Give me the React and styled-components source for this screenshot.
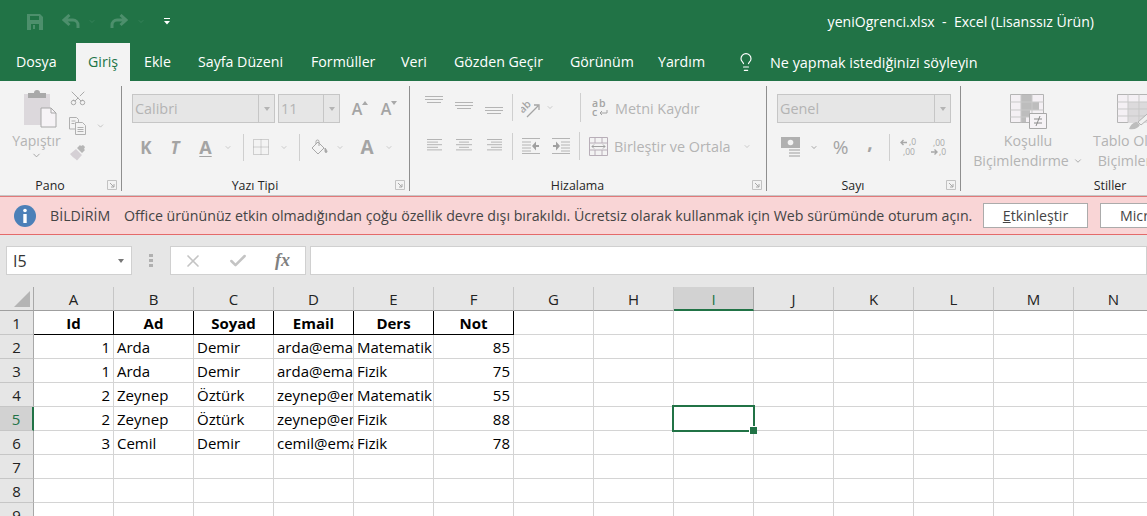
import React from "react";
import styled, { createGlobalStyle } from "styled-components";
import { Lightbulb, Scissors, ChevronDown, X, Check } from "lucide-react";

const GREEN = "#217346";
const MUTED = "#b4b4b4";
const UI_FONT = `"Open Sans", "Noto Sans", sans-serif`;

const GlobalStyle = createGlobalStyle`
  html, body {
    margin: 0;
    padding: 0;
    width: 1147px;
    height: 516px;
    overflow: hidden;
    background: #e6e6e6;
    font-family: ${UI_FONT};
  }
  * { box-sizing: border-box; }
`;

const Page = styled.div`
  width: 1147px;
  height: 516px;
  overflow: hidden;
`;

/* title bar */
const TitleBar = styled.div`
  height: 43px;
  background: ${GREEN};
  display: flex;
  align-items: center;
  padding-left: 27px;
  color: #fff;
`;
const QatIcon = styled.span`
  display: inline-flex;
  margin-left: ${(p) => p.$ml || 0}px;
`;
const DocTitle = styled.div`
  margin-left: auto;
  padding-right: 53px;
  font-size: 14.1px;
  white-space: pre;
  color: #fff;
`;

/* tabs */
const TabBar = styled.div`
  height: 38px;
  background: ${GREEN};
  display: flex;
  padding-left: 4px;
`;
const Tab = styled.div`
  flex: none;
  width: ${(p) => p.$w}px;
  margin-right: ${(p) => p.$mr || 0}px;
  padding-left: 12px;
  line-height: 38px;
  font-size: 14.2px;
  white-space: nowrap;
  color: ${(p) => (p.$active ? GREEN : "#fff")};
  background: ${(p) => (p.$active ? "#f3f3f3" : "transparent")};
`;
const TellMe = styled.div`
  display: flex;
  align-items: center;
  gap: 14px;
  margin-left: 9px;
  color: #fff;
  font-size: 14.4px;
  white-space: nowrap;
`;

/* ribbon */
const Ribbon = styled.div`
  height: 115px;
  background: #f3f3f3;
  border-bottom: 1px solid #c6c6c6;
  display: flex;
  overflow: hidden;
`;
const Group = styled.div`
  flex: none;
  width: ${(p) => p.$w}px;
  display: flex;
  flex-direction: column;
`;
const GroupSep = styled.div`
  flex: none;
  width: 1px;
  margin: 5px 0 4px;
  background: #8e8e8e;
`;
const GroupBody = styled.div`
  flex: 1;
  min-height: 0;
`;
const GroupFooter = styled.div`
  flex: none;
  height: 18px;
  margin-bottom: 1px;
  display: flex;
  align-items: center;
  padding-right: 4px;
`;
const GroupLabel = styled.div`
  flex: 1;
  text-align: center;
  padding-right: 7px;
  font-size: 12.4px;
  color: #262626;
`;
const Launcher = styled.svg`
  flex: none;
  width: 10px;
  height: 10px;
`;
const ToolRow = styled.div`
  display: flex;
  align-items: center;
  height: ${(p) => p.$h}px;
  margin-top: ${(p) => p.$mt || 0}px;
  padding-left: ${(p) => p.$pl || 0}px;
`;
const Tool = styled.span`
  flex: none;
  display: inline-flex;
  align-items: center;
  justify-content: center;
  width: ${(p) => p.$w}px;
  margin-left: ${(p) => p.$ml || 0}px;
  margin-top: ${(p) => p.$mt || 0}px;
`;
const Glyph = styled(Tool)`
  color: #a4a4a4;
  font-size: ${(p) => p.$size || 17}px;
  font-weight: ${(p) => p.$weight || 700};
  font-style: ${(p) => (p.$italic ? "italic" : "normal")};
  text-decoration: ${(p) => (p.$under ? "underline" : "none")};
  text-underline-offset: 2px;
  line-height: 1;
`;
const RuleV = styled.span`
  flex: none;
  width: 1px;
  height: ${(p) => p.$h || 27}px;
  margin-left: ${(p) => p.$ml || 0}px;
  background: #cfcfcf;
`;
const Combo = styled.div`
  flex: none;
  width: ${(p) => p.$w}px;
  margin-left: ${(p) => p.$ml || 0}px;
  height: 29px;
  background: #e6e6e6;
  border: 1px solid #c6c6c6;
  display: flex;
  align-items: center;
  color: #b4b4b4;
  font-size: 14.4px;
`;
const ComboText = styled.span`
  flex: 1;
  padding-left: 2px;
`;
const ComboArrow = styled.span`
  flex: none;
  width: 16px;
  height: 100%;
  border-left: 1px solid #c6c6c6;
  display: flex;
  align-items: center;
  justify-content: center;
  &::after {
    content: "";
    border: 3.5px solid transparent;
    border-top: 4px solid #b4b4b4;
    margin-top: 4px;
  }
`;
const MutedText = styled.span`
  flex: none;
  margin-left: ${(p) => p.$ml || 0}px;
  margin-top: 1px;
  color: ${MUTED};
  font-size: 14.4px;
  white-space: nowrap;
`;

/* pano group */
const PasteArea = styled.div`
  display: flex;
`;
const PasteColumn = styled.div`
  flex: none;
  width: 49px;
  margin-left: 12px;
  padding-top: 9px;
  display: flex;
  flex-direction: column;
  align-items: center;
  color: ${MUTED};
  font-size: 14px;
`;
const PasteBoard = styled.div`
  margin-left: 7px;
  height: 38px;
`;
const PasteLabel = styled.div`
  margin-top: 4px;
  line-height: 18px;
`;
const ClipColumn = styled.div`
  margin-left: 8px;
  padding-top: 8px;
  display: flex;
  flex-direction: column;
  gap: 10px;
`;

/* stiller group */
const StyleRow = styled.div`
  display: flex;
  padding-top: 13px;
`;
const StyleButton = styled.div`
  flex: none;
  width: ${(p) => p.$w}px;
  margin-left: ${(p) => p.$ml || 0}px;
  display: flex;
  flex-direction: column;
  align-items: center;
  color: ${MUTED};
  font-size: 14.2px;
  line-height: 20px;
  white-space: nowrap;
`;
const StyleIcon = styled.div`
  height: 37px;
`;
const StyleLine = styled.div`
  display: flex;
  align-items: center;
  gap: 4px;
`;

/* notification */
const Notice = styled.div`
  height: 39px;
  background: #f9d5d6;
  border-top: 1px solid #e07a7a;
  border-bottom: 1px solid #e46a6a;
  display: flex;
  align-items: center;
  padding-left: 14px;
  color: #444;
  white-space: nowrap;
  overflow: hidden;
`;
const NoticeTitle = styled.span`
  flex: none;
  margin-left: 14px;
  width: 74px;
  font-size: 14.2px;
`;
const NoticeText = styled.span`
  flex: none;
  width: 859px;
  font-size: 14.2px;
`;
const NoticeButton = styled.button`
  flex: none;
  width: ${(p) => p.$w}px;
  margin-right: 12px;
  height: 25px;
  padding: 0;
  background: #fff;
  border: 1px solid #ababab;
  font-family: inherit;
  font-size: 14.2px;
  color: #444;
  text-align: ${(p) => p.$align || "center"};
  padding-left: ${(p) => p.$pl || 0}px;
  u { text-decoration: underline; }
`;

/* formula bar */
const FormulaBar = styled.div`
  height: 52px;
  background: #e6e6e6;
  padding-top: 11px;
  display: flex;
  align-items: flex-start;
`;
const FormulaBox = styled.div`
  flex: ${(p) => (p.$grow ? 1 : "none")};
  width: ${(p) => p.$w}px;
  margin-left: ${(p) => p.$ml}px;
  height: 29px;
  background: #fff;
  border: 1px solid #d0d0d0;
  display: flex;
  align-items: center;
`;
const NameText = styled.span`
  flex: 1;
  padding-left: 6px;
  font-size: 16px;
  color: #333;
`;
const NameArrow = styled.span`
  margin-right: 7px;
  margin-top: 3px;
  border: 3.5px solid transparent;
  border-top: 4px solid #777;
`;
const Dots = styled.div`
  flex: none;
  margin-left: 17px;
  margin-top: 8px;
  width: 4px;
  display: flex;
  flex-direction: column;
  gap: 2px;
  span {
    height: 3px;
    background: #b0b0b0;
  }
`;
const FxText = styled.span`
  margin-left: 27px;
  font-family: "Liberation Serif", serif;
  font-style: italic;
  font-weight: 700;
  font-size: 18px;
  color: #808080;
`;

/* sheet */
const Sheet = styled.div`
  display: grid;
  grid-template-columns: 34px repeat(14, 80px);
  grid-auto-rows: 24px;
  background: #fff;
  font-family: ${UI_FONT};
`;
const Corner = styled.div`
  background: #e6e6e6;
  border-right: 1px solid #a8a8a8;
  border-bottom: 1px solid #9f9f9f;
  display: flex;
  align-items: flex-end;
  justify-content: flex-end;
  padding: 0 3px 3px 0;
`;
const ColHead = styled.div`
  background: ${(p) => (p.$sel ? "#d2d2d2" : "#e6e6e6")};
  border-right: 1px solid ${(p) => (p.$sel ? "#a8a8a8" : "#c6c6c6")};
  border-bottom: ${(p) => (p.$sel ? `2px solid ${GREEN}` : "1px solid #9f9f9f")};
  text-align: center;
  line-height: 24px;
  font-size: 15px;
  color: ${(p) => (p.$sel ? GREEN : "#222")};
`;
const RowHead = styled.div`
  background: ${(p) => (p.$sel ? "#d2d2d2" : "#e6e6e6")};
  border-right: ${(p) => (p.$sel ? `2px solid ${GREEN}` : "1px solid #a8a8a8")};
  border-bottom: 1px solid #c6c6c6;
  text-align: center;
  line-height: 24px;
  font-size: 15px;
  color: ${(p) => (p.$sel ? GREEN : "#222")};
`;
const Cell = styled.div`
  position: relative;
  overflow: ${(p) => (p.$sel ? "visible" : "hidden")};
  white-space: nowrap;
  padding: 0 3px;
  line-height: 24px;
  font-size: 15px;
  color: #000;
  text-align: ${(p) => p.$align || "left"};
  font-weight: ${(p) => (p.$bold ? 700 : 400)};
  border-right: 1px solid ${(p) => (p.$boxed ? "#000" : "#d4d4d4")};
  border-bottom: 1px solid ${(p) => (p.$boxed ? "#000" : "#d4d4d4")};
`;
const Selection = styled.div`
  position: absolute;
  left: -2px;
  top: -2px;
  width: 83px;
  height: 27px;
  border: 2px solid ${GREEN};
  z-index: 2;
  &::after {
    content: "";
    position: absolute;
    right: -4px;
    bottom: -4px;
    width: 7px;
    height: 7px;
    background: ${GREEN};
    border: 1px solid #fff;
    border-right: 0;
    border-bottom: 0;
  }
`;

/* drawings */
const Chev = ({ ml = 0, w = 9, color = "#a0a0a0" }) => (
  <Tool $w={w} $ml={ml}>
    <ChevronDown size={w + 3} color={color} strokeWidth={1.5} />
  </Tool>
);

const LauncherIcon = () => (
  <Launcher viewBox="0 0 10 10">
    <path d="M.5 9.500V.5h9v9z" fill="none" stroke="#c2c2c2" />
    <path d="M3 3l4 4M7 4v3H4" fill="none" stroke="#a8a8a8" />
  </Launcher>
);

const SaveIcon = () => (
  <svg width="16" height="16" viewBox="0 0 16 16">
    <path d="M0 0h13l3 3v13H0z" fill="#4d8f6c" />
    <path d="M3 2h9v4H3z" fill={GREEN} />
    <path d="M4 10h8v6H4z" fill={GREEN} />
    <path d="M6 11h2v4H6z" fill="#4d8f6c" />
  </svg>
);
const UndoIcon = ({ flip }) => (
  <svg width="18" height="15" viewBox="0 0 18 15" style={flip ? { transform: "scaleX(-1)" } : undefined}>
    <path d="M7.500 1L2 6l5.500 5M2.500 6H11a5 5 0 0 1 5 5v3" fill="none" stroke="#4d8f6c" strokeWidth="3" />
  </svg>
);
const CustomizeIcon = () => (
  <svg width="7" height="7" viewBox="0 0 7 7">
    <path d="M0 0h6v1H0zM0 3h6L3 6.500z" fill="#fff" />
  </svg>
);
const ClipboardIcon = () => (
  <svg width="34" height="38" viewBox="0 0 34 38">
    <path d="M1 4h26v31H1z" fill="#dcd8dc" />
    <path d="M5 3h6a3 3 0 0 1 6 0h6v5H5z" fill="#a9a9a9" />
    <path d="M18 18h10l5 5v14H18z" fill="#f6f3f6" stroke="#a8a8a8" />
    <path d="M28 18v5h5" fill="none" stroke="#a8a8a8" />
  </svg>
);
const CopyIcon = () => (
  <svg width="17" height="18" viewBox="0 0 17 18" fill="none" stroke="#b0b0b0">
    <path d="M.5.500h7l2 2V12H.5z" fill="#f3f3f3" />
    <path d="M6.500 5.500h7l3 3v9h-10z" fill="#f3f3f3" />
    <path d="M2.500 4h4M2.500 6.500h3M8.500 10.500h6M8.500 12.500h6M8.500 14.500h6" />
  </svg>
);
const BrushIcon = () => (
  <svg width="18" height="16" viewBox="0 0 18 16">
    <path d="M1 9l6-5 6 6-5 5.500C6 13 4 13 1 9z" fill="#d5d0d5" />
    <path d="M8 3l3-3 1 1 2-1 2 2-1 2 1 1-3 3z" fill="#b6b6b6" />
  </svg>
);
const GrowIcon = ({ down }) => (
  <span style={{ display: "inline-flex", alignItems: "flex-start" }}>
    <Glyph $w={11} $size={16} $weight={600}>A</Glyph>
    <svg width="6" height="4" viewBox="0 0 6 4" style={{ marginLeft: -1 }}>
      <path d={down ? "M0 0h6L3 4z" : "M0 4h6L3 0z"} fill="#a8a8a8" />
    </svg>
  </span>
);
const BordersIcon = () => (
  <svg width="16" height="16" viewBox="0 0 16 16" fill="none" stroke="#a8a8a8" strokeDasharray="1 1">
    <path d="M.5.500h15v15H.5zM8 .500v15M.5 8h15" />
  </svg>
);
const FillIcon = () => (
  <svg width="17" height="17" viewBox="0 0 17 17" fill="none" stroke="#a8a8a8">
    <path d="M1 9l6-6 6 6-6 6z" fill="#f3f3f3" />
    <path d="M5 5V2.500a1.500 1.500 0 0 1 3 0V7" />
    <path d="M14 9c1.500 2 2 3 2 3.500a1 1 0 0 1-2 0z" fill="#a8a8a8" />
  </svg>
);
const AlignLines = ({ widths, gap = 3, x = [], w = 18 }) => (
  <svg width={w} height={widths.length * gap + 1} viewBox={`0 0 ${w} ${widths.length * gap + 1}`} stroke="#b4b4b4">
    {widths.map((l, i) => (
      <path key={i} d={`M${x[i] ?? 0} ${i * gap + 0.5}h${l}`} />
    ))}
  </svg>
);
const OrientIcon = () => (
  <svg width="20" height="20" viewBox="0 0 20 20">
    <text x="-1" y="11" transform="rotate(-45 6 10)" fontFamily="Open Sans" fontWeight="600" fontSize="10.500" fill="#a4a4a4">ab</text>
    <path d="M6 19L17 8M13 7h5v5" fill="none" stroke="#a4a4a4" strokeWidth="1.300" />
  </svg>
);
const WrapIcon = () => (
  <svg width="17" height="20" viewBox="0 0 17 20">
    <text x="0" y="9" fontFamily="Open Sans" fontWeight="600" fontSize="10.500" letterSpacing="1" fill="#a4a4a4">ab</text>
    <text x="0" y="18" fontFamily="Open Sans" fontWeight="600" fontSize="10.500" fill="#a4a4a4">c</text>
    <path d="M15 12v3H8M10 13l-2 2 2 2" fill="none" stroke="#a4a4a4" />
  </svg>
);
const IndentIcon = ({ flip }) => (
  <svg width="18" height="16" viewBox="0 0 18 16" style={flip ? { transform: "scaleX(-1)" } : undefined}>
    <path d="M0 .500h18M0 15.500h18M9 4h9M9 7h9M9 10h9M9 13h9" stroke="#b4b4b4" fill="none" />
    <path d="M1 7h3V3.500L8 8l-4 4.500V9H1z" fill="#a0a0a0" />
  </svg>
);
const MergeIcon = () => (
  <svg width="19" height="19" viewBox="0 0 19 19" fill="none" stroke="#b8aeb8">
    <path d="M.5.500h18v18H.5zM.5 6h18M.5 13h18M6 .500V6M13 .500V6M6 13v5.500M13 13v5.500" />
    <path d="M3 9.500h13M5 7.500l-2 2 2 2M14 7.500l2 2-2 2" stroke="#a0a0a0" />
  </svg>
);
const CurrencyIcon = () => (
  <svg width="20" height="20" viewBox="0 0 20 20">
    <path d="M0 0h19v11H0z" fill="#b0b0b0" />
    <circle cx="9.500" cy="5.500" r="2.800" fill="#f3f3f3" />
    <path d="M8 12h11v2H8zM8 15h11v2H8zM8 18h11v2H8z" fill="#c8c8c8" />
  </svg>
);
const DecimalIcon = ({ up }) => (
  <svg width="17" height="19" viewBox="0 0 17 19" fontFamily="Open Sans" fontSize="8.500" fill="#a8a8a8">
    {up ? (
      <>
        <path d="M7 4.500H1M3.500 2L1 4.500 3.500 7" fill="none" stroke="#a8a8a8" strokeWidth="1.400" />
        <text x="9" y="7">,0</text>
        <text x="3" y="17">,00</text>
      </>
    ) : (
      <>
        <text x="3" y="8">,00</text>
        <path d="M1 14h6M4.500 11.500L7 14l-2.500 2.500" fill="none" stroke="#a8a8a8" strokeWidth="1.400" />
        <text x="9" y="17">,0</text>
      </>
    )}
  </svg>
);
const CondFormatIcon = () => (
  <svg width="37" height="35" viewBox="0 0 37 35">
    <path d="M.5.500h33v28H.5z" fill="#f4f0f4" stroke="#b4b4b4" />
    <path d="M11 1h11v7H11zM11 8h18v8H11zM11 16h9v7H11zM11 23h5v5H11z" fill="#bdbdbd" />
    <path d="M11 .500v28M22 .500v28M.5 8h33M.5 16h33M.5 23h33" stroke="#c9c9c9" fill="none" />
    <path d="M19.500 19.500h17v15h-17z" fill="#f6f3f6" stroke="#a8a8a8" />
    <path d="M24 25h8M24 29h8M30 22l-4 10" stroke="#8c8c8c" fill="none" />
  </svg>
);
const TableFormatIcon = () => (
  <svg width="37" height="36" viewBox="0 0 37 36">
    <path d="M.5.500h36v28H.5z" fill="#f4f0f4" stroke="#b4b4b4" />
    <path d="M11 8h26v21H11z" fill="#dcdadc" />
    <path d="M11 .500v28M22 .500v28M32 .500v28M.5 8h36M.5 15h36M.5 22h36" stroke="#c9c9c9" fill="none" />
    <path d="M12 35c2-5 5-7 8-7l3 3c-2 3-5 5-11 4z" fill="#bdbdbd" />
    <path d="M21 28l16-14v6L24 31z" fill="#f0f0f0" stroke="#b4b4b4" />
  </svg>
);
const InfoIcon = () => (
  <svg width="22" height="22" viewBox="0 0 22 22" style={{ flex: "none" }}>
    <circle cx="11" cy="11" r="11" fill="#4c80b8" />
    <circle cx="11" cy="5.500" r="1.800" fill="#fff" />
    <path d="M9.300 9h3.400v9H9.300z" fill="#fff" />
  </svg>
);
const CornerIcon = () => (
  <svg width="16" height="16" viewBox="0 0 16 16">
    <path d="M16 0v16H0z" fill="#b4b4b4" />
  </svg>
);

const COLS = ["A", "B", "C", "D", "E", "F", "G", "H", "I", "J", "K", "L", "M", "N"];
const HEAD = ["Id", "Ad", "Soyad", "Email", "Ders", "Not"];
const DATA = [
  ["1", "Arda", "Demir", "arda@email.com", "Matematik", "85"],
  ["1", "Arda", "Demir", "arda@email.com", "Fizik", "75"],
  ["2", "Zeynep", "Öztürk", "zeynep@email.com", "Matematik", "55"],
  ["2", "Zeynep", "Öztürk", "zeynep@email.com", "Fizik", "88"],
  ["3", "Cemil", "Demir", "cemil@email.com", "Fizik", "78"],
];
const SEL_COL = 8;
const SEL_ROW = 5;

const rowValues = (row) => {
  if (row === 1) return HEAD;
  return DATA[row - 2] || [];
};

const SheetGrid = () => (
  <Sheet>
    <Corner>
      <CornerIcon />
    </Corner>
    {COLS.map((c, i) => (
      <ColHead key={c} $sel={i === SEL_COL}>{c}</ColHead>
    ))}
    {[1, 2, 3, 4, 5, 6, 7, 8, 9].map((row) => {
      const vals = rowValues(row);
      return (
        <React.Fragment key={row}>
          <RowHead $sel={row === SEL_ROW}>{row}</RowHead>
          {COLS.map((c, i) => {
            const numeric = i === 0 || i === 5;
            const isHead = row === 1 && i < 6;
            const selected = row === SEL_ROW && i === SEL_COL;
            return (
              <Cell
                key={c}
                $sel={selected}
                $bold={isHead}
                $boxed={isHead}
                $align={isHead ? "center" : numeric ? "right" : "left"}
              >
                {vals[i]}
                {selected && <Selection />}
              </Cell>
            );
          })}
        </React.Fragment>
      );
    })}
  </Sheet>
);

const App = () => {
  return (
    <Page>
      <GlobalStyle />
      <TitleBar>
        <QatIcon><SaveIcon /></QatIcon>
        <QatIcon $ml={19}><UndoIcon /></QatIcon>
        <Chev ml={8} w={8} color="#4d8f6c" />
        <QatIcon $ml={14}><UndoIcon flip /></QatIcon>
        <Chev ml={9} w={8} color="#4d8f6c" />
        <QatIcon $ml={19}><CustomizeIcon /></QatIcon>
        <DocTitle>yeniOgrenci.xlsx  -  Excel (Lisanssız Ürün)</DocTitle>
      </TitleBar>

      <TabBar>
        <Tab $w={65} $mr={7}>Dosya</Tab>
        <Tab $w={54} $mr={2} $active>Giriş</Tab>
        <Tab $w={54}>Ekle</Tab>
        <Tab $w={113}>Sayfa Düzeni</Tab>
        <Tab $w={90}>Formüller</Tab>
        <Tab $w={53}>Veri</Tab>
        <Tab $w={116}>Gözden Geçir</Tab>
        <Tab $w={88}>Görünüm</Tab>
        <Tab $w={81}>Yardım</Tab>
        <TellMe>
          <Lightbulb size={20} strokeWidth={1.4} />
          Ne yapmak istediğinizi söyleyin
        </TellMe>
      </TabBar>

      <Ribbon>
        <Group $w={121}>
          <GroupBody>
            <PasteArea>
              <PasteColumn>
                <PasteBoard><ClipboardIcon /></PasteBoard>
                <PasteLabel>Yapıştır</PasteLabel>
                <ChevronDown size={11} color="#a0a0a0" />
              </PasteColumn>
              <ClipColumn>
                <Scissors size={18} color="#a8a8a8" strokeWidth={1.3} style={{ transform: "rotate(-90deg)" }} />
                <ToolRow $h={18}>
                  <CopyIcon />
                  <Chev ml={10} />
                </ToolRow>
                <BrushIcon />
              </ClipColumn>
            </PasteArea>
          </GroupBody>
          <GroupFooter>
            <GroupLabel>Pano</GroupLabel>
            <LauncherIcon />
          </GroupFooter>
        </Group>
        <GroupSep />

        <Group $w={287}>
          <GroupBody>
            <ToolRow $h={29} $mt={13} $pl={10}>
              <Combo $w={143}><ComboText>Calibri</ComboText><ComboArrow /></Combo>
              <Combo $w={62} $ml={3}><ComboText>11</ComboText><ComboArrow /></Combo>
              <Tool $w={15} $ml={12}><GrowIcon /></Tool>
              <Tool $w={15} $ml={14}><GrowIcon down /></Tool>
            </ToolRow>
            <ToolRow $h={28} $mt={10} $pl={18}>
              <Glyph $w={12}>K</Glyph>
              <Glyph $w={12} $ml={17} $italic>T</Glyph>
              <Glyph $w={15} $ml={17} $size={18} $under>A</Glyph>
              <Chev ml={11} w={8} />
              <RuleV $ml={11} />
              <Tool $w={16} $ml={9}><BordersIcon /></Tool>
              <Chev ml={11} w={8} />
              <RuleV $ml={11} />
              <Tool $w={17} $ml={11}><FillIcon /></Tool>
              <Chev ml={8} w={8} />
              <Glyph $w={12} $ml={17} $size={19}>A</Glyph>
              <Chev ml={12} w={8} />
            </ToolRow>
          </GroupBody>
          <GroupFooter>
            <GroupLabel>Yazı Tipi</GroupLabel>
            <LauncherIcon />
          </GroupFooter>
        </Group>
        <GroupSep />

        <Group $w={356}>
          <GroupBody>
            <ToolRow $h={29} $mt={12} $pl={15}>
              <Tool $w={18} $mt={-14}><AlignLines widths={[18, 18, 14]} x={[0, 0, 2]} /></Tool>
              <Tool $w={18} $ml={12} $mt={-1}><AlignLines widths={[18, 18, 14]} x={[0, 0, 2]} /></Tool>
              <Tool $w={18} $ml={12} $mt={8}><AlignLines widths={[18, 18, 14]} x={[0, 0, 2]} /></Tool>
              <RuleV $ml={9} />
              <Tool $w={20} $ml={8}><OrientIcon /></Tool>
              <Chev ml={5} w={8} />
              <RuleV $ml={26} $h={29} />
              <Tool $w={17} $ml={11}><WrapIcon /></Tool>
              <MutedText $ml={6}>Metni Kaydır</MutedText>
            </ToolRow>
            <ToolRow $h={28} $mt={10} $pl={17}>
              <Tool $w={15}><AlignLines w={15} widths={[15, 11, 15, 11, 15]} gap={2.600} /></Tool>
              <Tool $w={16} $ml={14}><AlignLines w={16} widths={[16, 10, 16, 10, 16]} x={[0, 3, 0, 3, 0]} gap={2.600} /></Tool>
              <Tool $w={15} $ml={15}><AlignLines w={15} widths={[15, 11, 15, 11, 15]} x={[0, 4, 0, 4, 0]} gap={2.600} /></Tool>
              <RuleV $ml={10} />
              <Tool $w={18} $ml={9}><IndentIcon flip /></Tool>
              <Tool $w={18} $ml={12}><IndentIcon /></Tool>
              <RuleV $ml={9} $h={28} />
              <Tool $w={19} $ml={9}><MergeIcon /></Tool>
              <MutedText $ml={6}>Birleştir ve Ortala</MutedText>
              <Chev ml={12} w={8} />
            </ToolRow>
          </GroupBody>
          <GroupFooter>
            <GroupLabel>Hizalama</GroupLabel>
            <LauncherIcon />
          </GroupFooter>
        </Group>
        <GroupSep />

        <Group $w={193}>
          <GroupBody>
            <ToolRow $h={29} $mt={13} $pl={10}>
              <Combo $w={174}><ComboText>Genel</ComboText><ComboArrow /></Combo>
            </ToolRow>
            <ToolRow $h={28} $mt={10} $pl={14}>
              <Tool $w={20}><CurrencyIcon /></Tool>
              <Chev ml={9} w={8} color="#555" />
              <Glyph $w={15} $ml={15} $size={19} $weight={400}>%</Glyph>
              <Glyph $w={6} $ml={19} $mt={-10} $size={19}>,</Glyph>
              <RuleV $ml={16} />
              <Tool $w={17} $ml={10}><DecimalIcon up /></Tool>
              <Tool $w={17} $ml={13}><DecimalIcon /></Tool>
            </ToolRow>
          </GroupBody>
          <GroupFooter>
            <GroupLabel>Sayı</GroupLabel>
            <LauncherIcon />
          </GroupFooter>
        </Group>
        <GroupSep />

        <Group $w={309}>
          <GroupBody>
            <StyleRow>
              <StyleButton $w={110} $ml={12}>
                <StyleIcon><CondFormatIcon /></StyleIcon>
                <div>Koşullu</div>
                <StyleLine>Biçimlendirme <ChevronDown size={10} color="#a0a0a0" /></StyleLine>
              </StyleButton>
              <StyleButton $w={94} $ml={5}>
                <StyleIcon><TableFormatIcon /></StyleIcon>
                <div>Tablo Olarak</div>
                <div>Biçimlendir</div>
              </StyleButton>
            </StyleRow>
          </GroupBody>
          <GroupFooter>
            <GroupLabel>Stiller</GroupLabel>
          </GroupFooter>
        </Group>
      </Ribbon>

      <Notice>
        <InfoIcon />
        <NoticeTitle>BİLDİRİM</NoticeTitle>
        <NoticeText>
          Office ürününüz etkin olmadığından çoğu özellik devre dışı bırakıldı. Ücretsiz olarak kullanmak için Web sürümünde oturum açın.
        </NoticeText>
        <NoticeButton $w={105}><u>E</u>tkinleştir</NoticeButton>
        <NoticeButton $w={100} $align="left" $pl={19}>Microsoft</NoticeButton>
      </Notice>

      <FormulaBar>
        <FormulaBox $w={126} $ml={6}>
          <NameText>I5</NameText>
          <NameArrow />
        </FormulaBox>
        <Dots><span /><span /><span /></Dots>
        <FormulaBox $w={136} $ml={17}>
          <X size={20} color="#c4c4c4" strokeWidth={2} style={{ marginLeft: 12 }} />
          <Check size={20} color="#c4c4c4" strokeWidth={3} style={{ marginLeft: 25 }} />
          <FxText>fx</FxText>
        </FormulaBox>
        <FormulaBox $grow $ml={4} />
      </FormulaBar>

      <SheetGrid />
    </Page>
  );
};

export default App;
